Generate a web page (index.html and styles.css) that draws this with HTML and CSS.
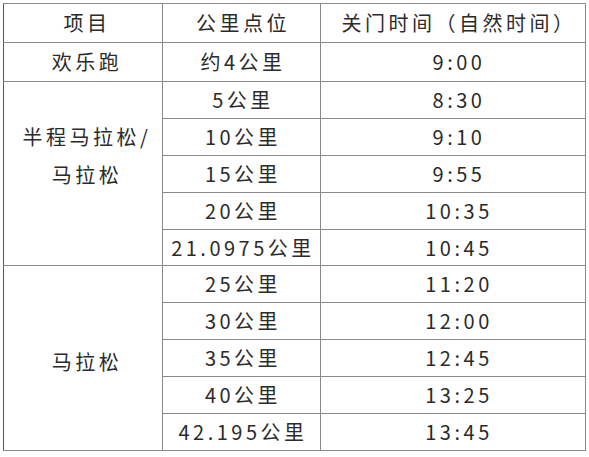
FILE: index.html
```html
<!DOCTYPE html>
<html lang="zh">
<head>
<meta charset="utf-8">
<link rel="stylesheet" href="styles.css">
</head>
<body>
<table class="tbl">
  <colgroup>
    <col class="c1"><col class="c2"><col class="c3">
  </colgroup>
  <tr><td class="k">项目</td><td>公里点位</td><td class="t">关门时间（自然时间）</td></tr>
  <tr><td class="k">欢乐跑</td><td>约4公里</td><td class="t">9:00</td></tr>
  <tr><td class="k high" rowspan="5">半程马拉松/<br>马拉松</td><td>5公里</td><td class="t">8:30</td></tr>
  <tr><td>10公里</td><td class="t">9:10</td></tr>
  <tr><td>15公里</td><td class="t">9:55</td></tr>
  <tr><td>20公里</td><td class="t">10:35</td></tr>
  <tr><td>21.0975公里</td><td class="t">10:45</td></tr>
  <tr><td class="k low" rowspan="5">马拉松</td><td>25公里</td><td class="t">11:20</td></tr>
  <tr><td>30公里</td><td class="t">12:00</td></tr>
  <tr><td>35公里</td><td class="t">12:45</td></tr>
  <tr><td>40公里</td><td class="t">13:25</td></tr>
  <tr><td>42.195公里</td><td class="t">13:45</td></tr>
</table>
</body>
</html>
```

FILE: styles.css
```css
html, body {
  margin: 0;
  padding: 0;
  background: #ffffff;
}
.tbl {
  margin: 3px 0 0 3px;
  border-collapse: collapse;
  table-layout: fixed;
  width: 582px;
  font-family: "Noto Sans CJK SC", "Noto Sans", sans-serif;
  font-size: 20px;
  color: #2b2b2b;
  letter-spacing: 3.5px;
}
.c1 { width: 159px; }
.c2 { width: 158px; }
.c3 { width: 265px; }
.tbl tr { height: 36.9px; }
.tbl td {
  border: 1px solid #8a8a8a;
  text-align: center;
  vertical-align: middle;
  padding: 0 0 0 3px;
  line-height: 26px;
  white-space: nowrap;
}
.tbl td.k {
  padding-left: 8px;
  line-height: 38px;
  border-left-color: #555555;
}
.tbl td.t {
  padding-left: 12px;
}
.tbl td.high {
  padding-bottom: 36px;
}
.tbl td.low {
  padding-top: 8px;
}
```
